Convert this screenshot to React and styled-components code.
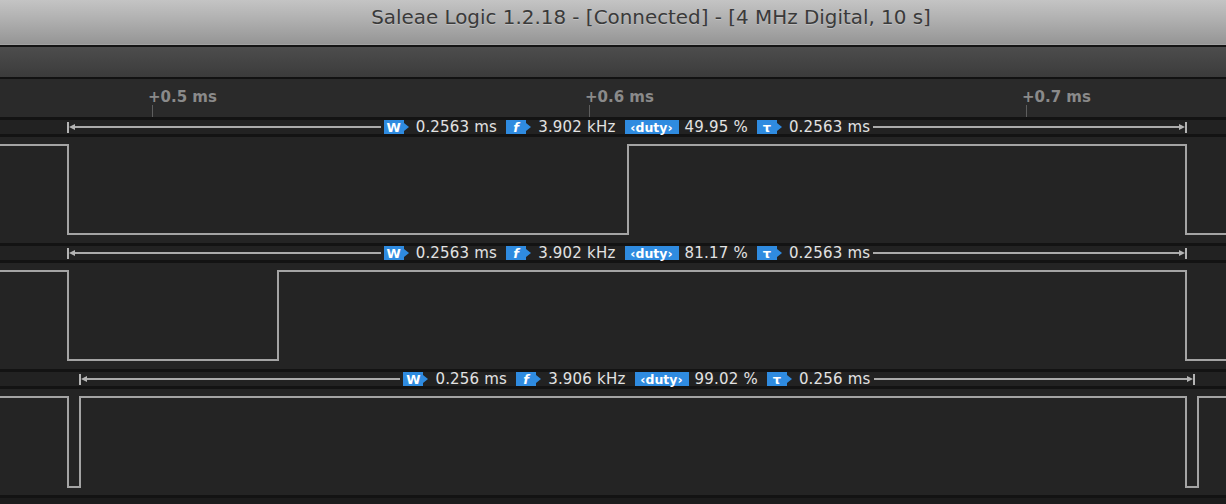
import React from "react";
import styled, { createGlobalStyle } from "styled-components";

const Global = createGlobalStyle`
  html, body {
    margin: 0;
    padding: 0;
    background: #161616;
    overflow: hidden;
  }
  #root {
    width: 1226px;
    height: 504px;
  }
`;

const Window = styled.div`
  width: 1226px;
  height: 504px;
  display: flex;
  flex-direction: column;
  background: #161616;
  font-family: "DejaVu Sans", Verdana, sans-serif;
  overflow: hidden;
`;

const TitleBar = styled.div`
  height: 45px;
  border-bottom: 1px solid #a2a2a2;
  background: linear-gradient(#c4c4c4, #b2b2b2 40%, #959595);
  display: flex;
  justify-content: center;
  padding-left: 76px;
  padding-top: 5px;
  box-sizing: border-box;
  .title {
    color: #3a3a3a;
    font-size: 19.9px;
    line-height: 26px;
    text-shadow: 0 1px 0 rgba(255, 255, 255, 0.25);
  }
`;

const Toolbar = styled.div`
  height: 30px;
  border-top: 2px solid #151515;
  border-bottom: 2px solid #121212;
  background: linear-gradient(#4d4d4d, #3b3b3b);
`;

const Ruler = styled.div`
  position: relative;
  height: 38px;
  background: #2a2a2a;
`;

const Tick = styled.div`
  position: absolute;
  top: 0;
  height: 38px;
  .label {
    position: absolute;
    left: -4px;
    top: 9px;
    color: #8a8a8a;
    font-weight: bold;
    font-size: 15px;
    white-space: nowrap;
  }
  .mark {
    position: absolute;
    left: 0;
    top: 26px;
    width: 1px;
    height: 12px;
    background: #5e5e5e;
  }
`;

const Channel = styled.div`
  display: flex;
  flex-direction: column;
`;

const MeasureBar = styled.div`
  height: 14px;
  border-top: 3px solid #131313;
  border-bottom: 3px solid #131313;
  background: #222222;
  display: flex;
  align-items: center;
  box-sizing: content-box;
`;

const Cap = styled.div`
  display: flex;
  align-items: center;
  flex-direction: ${(p) => (p.$right ? "row-reverse" : "row")};
  .bar {
    width: 2px;
    height: 11px;
    background: #b4b4b4;
  }
  .tri {
    width: 0;
    height: 0;
    border-top: 3px solid transparent;
    border-bottom: 3px solid transparent;
    ${(p) =>
      p.$right
        ? "border-left: 6px solid #b4b4b4;"
        : "border-right: 6px solid #b4b4b4;"}
  }
`;

const Line = styled.div`
  flex: 1;
  height: 2px;
  background: #ababab;
`;

const Items = styled.div`
  display: flex;
  align-items: center;
  margin: 0 3px;
`;

const Badge = styled.span`
  position: relative;
  display: inline-flex;
  align-items: center;
  justify-content: center;
  height: 14px;
  min-width: ${(p) => (p.$wide ? 54 : 20)}px;
  padding: 0 ${(p) => (p.$wide ? 2 : 0)}px;
  box-sizing: border-box;
  background: #2f8be0;
  color: #ffffff;
  font-size: ${(p) => (p.$wide ? 12.5 : 13)}px;
  font-weight: bold;
  font-style: ${(p) => (p.$italic ? "italic" : "normal")};
  margin-right: ${(p) => (p.$arrow ? 12 : 6)}px;
  ${(p) =>
    p.$arrow &&
    `
    &::after {
      content: "";
      position: absolute;
      right: -5px;
      top: 3px;
      border-top: 4px solid transparent;
      border-bottom: 4px solid transparent;
      border-left: 5px solid #2f8be0;
    }
  `}
`;

const Value = styled.span`
  color: #e2e2e2;
  font-size: 15px;
  letter-spacing: 0.2px;
  white-space: nowrap;
  margin-right: ${(p) => (p.$last ? 0 : 9)}px;
`;

const Signal = styled.div`
  height: 106px;
  background: #242424;
  svg {
    display: block;
  }
`;

const Footer = styled.div`
  flex: 1;
  border-top: 3px solid #131313;
  background: #1c1c1c;
`;

const ticks = [
  { x: 152, label: "+0.5 ms" },
  { x: 589, label: "+0.6 ms" },
  { x: 1026, label: "+0.7 ms" },
];

const HIGH = 8;
const LOW = 97;

const channels = [
  {
    start: 68,
    end: 1186,
    edges: [
      [0, HIGH],
      [68, HIGH],
      [68, LOW],
      [628, LOW],
      [628, HIGH],
      [1186, HIGH],
      [1186, LOW],
      [1226, LOW],
    ],
    values: ["0.2563 ms", "3.902 kHz", "49.95 %", "0.2563 ms"],
  },
  {
    start: 68,
    end: 1186,
    edges: [
      [0, HIGH],
      [68, HIGH],
      [68, LOW],
      [278, LOW],
      [278, HIGH],
      [1186, HIGH],
      [1186, LOW],
      [1226, LOW],
    ],
    values: ["0.2563 ms", "3.902 kHz", "81.17 %", "0.2563 ms"],
  },
  {
    start: 80,
    end: 1194,
    edges: [
      [0, HIGH],
      [68, HIGH],
      [68, 98],
      [80, 98],
      [80, HIGH],
      [1186, HIGH],
      [1186, 98],
      [1198, 98],
      [1198, HIGH],
      [1226, HIGH],
    ],
    values: ["0.256 ms", "3.906 kHz", "99.02 %", "0.256 ms"],
  },
];

function Measurement({ start, end, values }) {
  return (
    <MeasureBar style={{ paddingLeft: start - 1, paddingRight: 1226 - end - 1 }}>
      <Cap>
        <div className="bar" />
        <div className="tri" />
      </Cap>
      <Line />
      <Items>
        <Badge $arrow>W</Badge>
        <Value>{values[0]}</Value>
        <Badge $arrow $italic>f</Badge>
        <Value>{values[1]}</Value>
        <Badge $wide>‹duty›</Badge>
        <Value>{values[2]}</Value>
        <Badge $arrow>τ</Badge>
        <Value $last>{values[3]}</Value>
      </Items>
      <Line />
      <Cap $right>
        <div className="bar" />
        <div className="tri" />
      </Cap>
    </MeasureBar>
  );
}

function Waveform({ edges }) {
  const d = edges.map((p, i) => `${i ? "L" : "M"}${p[0]} ${p[1]}`).join(" ");
  return (
    <Signal>
      <svg width="1226" height="106" viewBox="0 0 1226 106">
        <path d={d} fill="none" stroke="#a4a4a4" strokeWidth="2" />
      </svg>
    </Signal>
  );
}

export default function App() {
  return (
    <Window>
      <Global />
      <TitleBar>
        <span className="title">
          Saleae Logic 1.2.18 - [Connected] - [4 MHz Digital, 10 s]
        </span>
      </TitleBar>
      <Toolbar />
      <Ruler>
        {ticks.map((t) => (
          <Tick key={t.label} style={{ left: t.x }}>
            <span className="label">{t.label}</span>
            <div className="mark" />
          </Tick>
        ))}
      </Ruler>
      {channels.map((c, i) => (
        <Channel key={i}>
          <Measurement start={c.start} end={c.end} values={c.values} />
          <Waveform edges={c.edges} />
        </Channel>
      ))}
      <Footer />
    </Window>
  );
}
